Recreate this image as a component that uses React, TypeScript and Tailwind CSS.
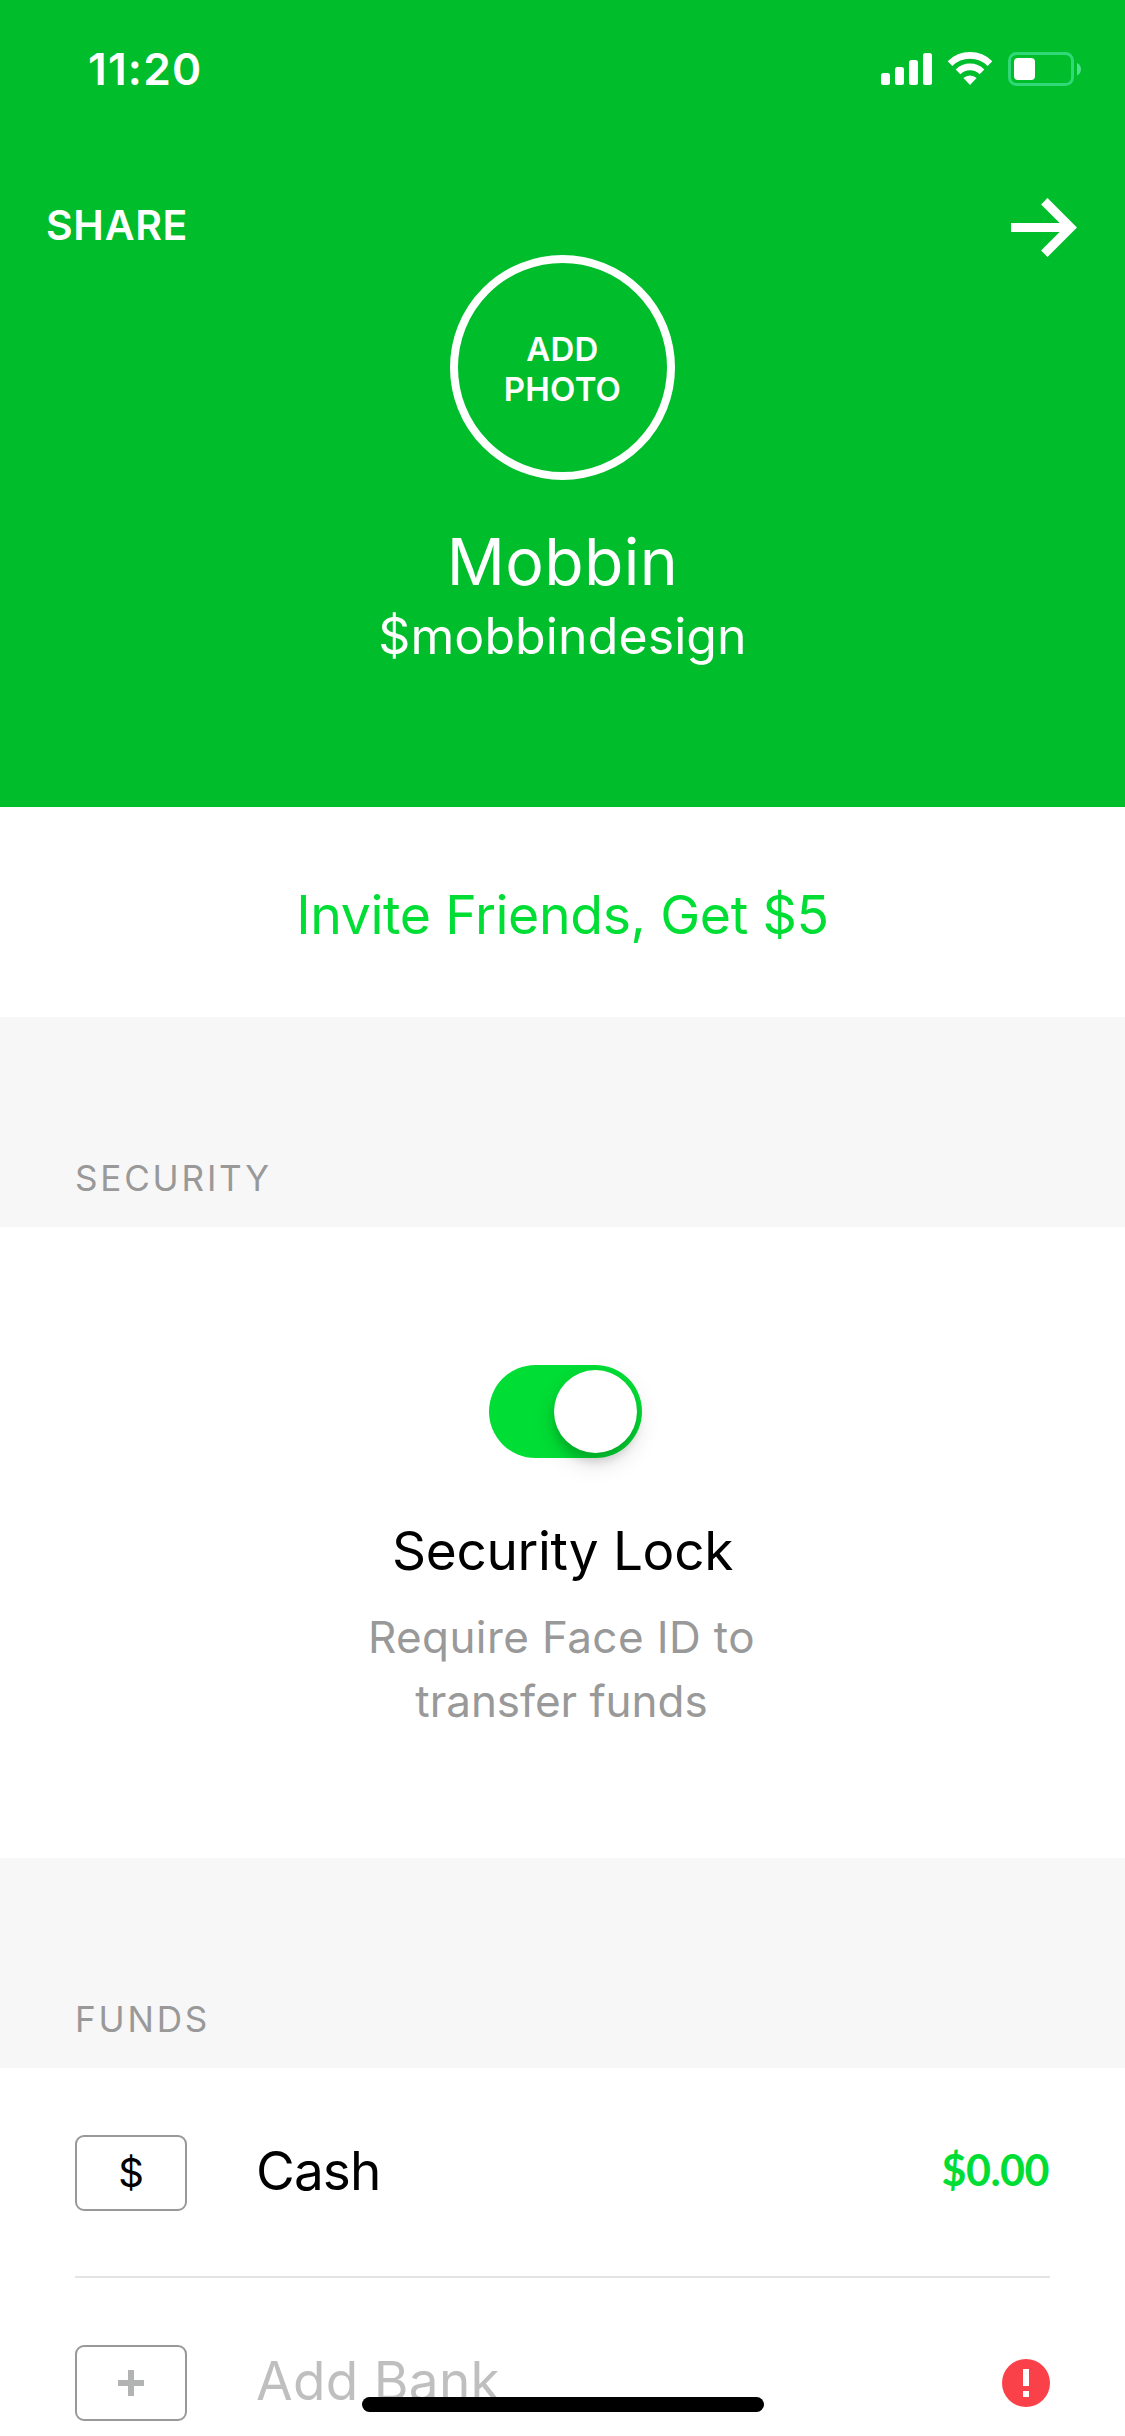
import type { ReactNode } from "react";

const SignalIcon = () => (
  <svg width="51" height="34" viewBox="0 0 51 34" fill="#fff">
    <rect x="0" y="21" width="9" height="12" rx="2.5" />
    <rect x="14" y="15" width="9" height="18" rx="2.5" />
    <rect x="28" y="8" width="9" height="25" rx="2.5" />
    <rect x="42" y="1" width="9" height="32" rx="2.5" />
  </svg>
);

const WifiIcon = () => (
  <svg width="46" height="34" viewBox="0 0 46 34" fill="none">
    <path d="M3 11.6a28.5 28.5 0 0 1 40 0" stroke="#fff" strokeWidth="6.6" />
    <path d="M11 19.8a17.2 17.2 0 0 1 24 0" stroke="#fff" strokeWidth="6.6" />
    <path d="M16.4 26.1a9.4 9.4 0 0 1 13.2 0L23 32.9z" fill="#fff" />
  </svg>
);

const BatteryIcon = () => (
  <svg width="73" height="34" viewBox="0 0 73 34" fill="none">
    <rect x="1.5" y="1.5" width="63" height="31" rx="7" stroke="#30d878" strokeWidth="3" />
    <rect x="6" y="6" width="21" height="22" rx="4" fill="#fff" />
    <path d="M69 11c5.300 2.200 5.300 10.200 0 12.400z" fill="#4fdf8c" />
  </svg>
);

const ArrowIcon = () => (
  <svg width="66" height="59" viewBox="0 0 66 59" fill="none" stroke="#fff" strokeWidth="9">
    <path d="M0 29.500H57" />
    <path d="M33.300 3.200L59.600 29.500L33.300 55.800" />
  </svg>
);

const AlertIcon = () => (
  <svg width="48" height="48" viewBox="0 0 48 48">
    <circle cx="24" cy="24" r="24" fill="#fa4149" />
    <path d="M21 10h6v17h-6zM21 32h6v6h-6z" fill="#fff" />
  </svg>
);

const PlusIcon = () => (
  <svg width="26" height="26" viewBox="0 0 26 26">
    <path d="M10 0h6v10h10v6H16v10h-6V16H0v-6h10z" fill="#b2b4b3" />
  </svg>
);

const SectionTitle = ({ children }: { children: ReactNode }) => (
  <h2 className="flex h-[210px] items-end bg-[#f7f7f7] pb-[29px] pl-[75px] text-[35.1px] leading-10 tracking-[2.8px] text-[#999]">
    {children}
  </h2>
);

const CardBox = ({ children }: { children: ReactNode }) => (
  <div className="flex h-[76px] w-28 shrink-0 items-center justify-center rounded-[9px] border-2 border-[#999]">
    {children}
  </div>
);

const Header = () => (
  <header className="h-[807px] bg-[#00bd2c] text-white">
    <div className="flex h-[138px] items-center pr-11 pl-[88px]">
      <span className="text-[44.3px] leading-none font-semibold tracking-[1.2px]">11:20</span>
      <div className="ml-auto flex items-center">
        <SignalIcon />
        <div className="ml-[15px]">
          <WifiIcon />
        </div>
        <div className="ml-[15px]">
          <BatteryIcon />
        </div>
      </div>
    </div>

    <div className="flex h-[117px] items-start justify-between pr-12 pl-[46px]">
      <button className="mt-[67px] text-[41px] leading-10 font-semibold tracking-[0.7px]">SHARE</button>
      <button className="mt-[60px]">
        <ArrowIcon />
      </button>
    </div>

    <div className="flex flex-col items-center">
      <button className="flex size-[225px] flex-col items-center justify-center rounded-full border-8 border-white pt-0.5 text-[33px] leading-10 font-semibold tracking-[0.2px]">
        <span>ADD</span>
        <span>PHOTO</span>
      </button>
      <h1 className="mt-11 text-[64.4px] leading-[76px] tracking-[0.36px]">Mobbin</h1>
      <p className="mt-1.5 text-[50px] leading-[60px] tracking-[0.1px]">$mobbindesign</p>
    </div>
  </header>
);

export default function App() {
  return (
    <main className="relative h-[2436px] w-[1125px] overflow-hidden bg-white font-['Inter','Liberation_Sans',sans-serif] text-black">
      <Header />

      <button className="flex h-[210px] w-full items-center justify-center pt-1.5 text-[53.6px] tracking-[-0.4px] text-[#00de35]">
        Invite Friends, Get $5
      </button>

      <SectionTitle>SECURITY</SectionTitle>
      <section className="flex h-[631px] flex-col items-center pt-[138px] text-center">
        <div className="ml-1.5 flex h-[93px] w-[153px] items-center justify-end rounded-full bg-[#00de35] pr-[5px]">
          <div className="size-[83px] rounded-full bg-white shadow-[0_9px_24px_rgba(0,0,0,0.15),0_9px_9px_rgba(0,0,0,0.12)]" />
        </div>
        <h3 className="mt-[61px] text-[53.1px] leading-16 tracking-[-0.3px]">Security Lock</h3>
        <p className="mt-[22px] mr-0.5 text-[44px] leading-16 text-[#999]">
          <span className="tracking-[0.4px]">Require Face ID to</span>
          <br />
          <span className="tracking-[-0.05px]">transfer funds</span>
        </p>
      </section>

      <SectionTitle>FUNDS</SectionTitle>
      <ul className="px-[75px]">
        <li className="flex h-[210px] items-center border-b-2 border-[#e4e4e4] pt-0.5">
          <CardBox>
            <span className="text-[40px] leading-none">$</span>
          </CardBox>
          <span className="ml-[69px] pb-1 text-[53.1px] leading-16 tracking-[-0.87px]">Cash</span>
          <span className="mr-px ml-auto pb-[7px] font-['Lato',sans-serif] text-[43px] leading-12 font-bold tracking-[-0.5px] text-[#00de35]">
            $0.00
          </span>
        </li>
        <li className="flex h-[210px] items-center">
          <CardBox>
            <PlusIcon />
          </CardBox>
          <span className="ml-[69px] pb-1 text-[53.1px] leading-16 tracking-[0.3px] text-[#bfbfbf]">Add Bank</span>
          <div className="ml-auto">
            <AlertIcon />
          </div>
        </li>
      </ul>

      {/* home indicator */}
      <div className="absolute bottom-6 left-[362px] h-[15px] w-[402px] rounded-full bg-black" />
    </main>
  );
}
